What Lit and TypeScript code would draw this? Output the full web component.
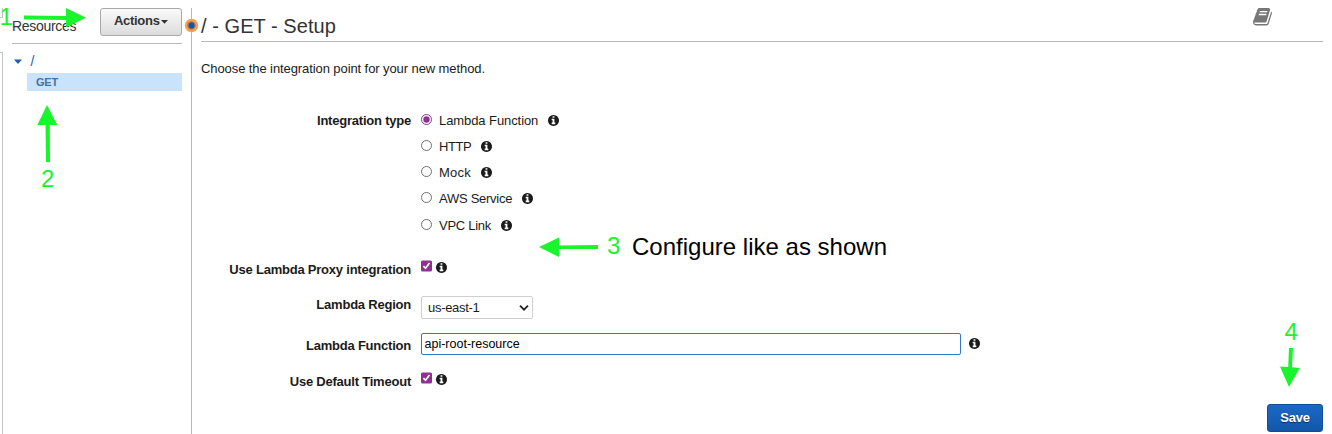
import { LitElement, html, css, svg } from "lit";
import { customElement, property } from "lit/decorators.js";

@customElement("info-icon")
class InfoIcon extends LitElement {
  static styles = css`
    :host { display: block; width: 11px; height: 11px; flex: none; }
    svg { display: block; }
  `;
  render() {
    return html`<svg width="11" height="11" viewBox="0 128 1536 1536" fill="#1b1b1b"><path d="M1024 1376v-160q0-14-9-23t-23-9h-96v-512q0-14-9-23t-23-9h-320q-14 0-23 9t-9 23v160q0 14 9 23t23 9h96v320h-96q-14 0-23 9t-9 23v160q0 14 9 23t23 9h448q14 0 23-9t9-23zm-128-896v-160q0-14-9-23t-23-9h-192q-14 0-23 9t-9 23v160q0 14 9 23t23 9h192q14 0 23-9t9-23zm640 416q0 209-103 385.5t-279.5 279.5-385.5 103-385.5-103-279.5-279.5-103-385.5 103-385.5 279.5-279.5 385.5-103 385.5 103 279.5 279.5 103 385.5z"/></svg>`;
  }
}

@customElement("radio-option")
class RadioOption extends LitElement {
  @property() label = "";
  @property({ type: Number }) tracking = 0;
  @property({ type: Boolean }) checked = false;
  static styles = css`
    :host { display: flex; height: 26px; align-items: flex-start; line-height: 15px; }
    .dot { display: block; flex: none; width: 12px; height: 12px; margin: 1px 6px 0 0; }
    .text { padding-top: 1px; margin-right: 10px; white-space: nowrap; }
    info-icon { margin-top: 3px; }
  `;
  render() {
    const c = this.checked ? "#8a348f" : "#6f6f6f";
    return html`
      <svg class="dot" viewBox="0 0 12 12">
        <circle cx="5.5" cy="6.5" r="5" fill="#fff" stroke=${c} stroke-width="1"></circle>
        ${this.checked ? svg`<circle cx="5.5" cy="6.5" r="3.2" fill=${c}></circle>` : null}
      </svg>
      <span class="text" style="letter-spacing:${this.tracking}px">${this.label}</span><info-icon></info-icon>`;
  }
}

@customElement("check-box")
class CheckBox extends LitElement {
  static styles = css`
    :host { display: flex; align-items: flex-start; gap: 4px; }
    svg { display: block; }
    info-icon { margin-top: 2px; }
  `;
  render() {
    return html`
      <svg width="11" height="12" viewBox="0 0 11 12">
        <rect y="0.4" width="11" height="11" rx="1.5" fill="#8a348f"></rect>
        <path d="M2.4 6.1 4.5 8.3 8.5 2.900" fill="none" stroke="#fff" stroke-width="1.6"></path>
      </svg><info-icon></info-icon>`;
  }
}

@customElement("app-root")
class AppRoot extends LitElement {
  static styles = css`
    :host {
      display: block; position: relative; width: 1332px; height: 434px; overflow: hidden;
      background: #fff; color: #1b1b1b; font: 13px/15px "Liberation Sans", Arial, sans-serif;
    }
    * { box-sizing: border-box; }
    .page { display: flex; height: 434px; }
    .edge { width: 3px; flex: none; display: flex; flex-direction: column; padding-top: 8px; }
    .edge-top { height: 10px; border: solid #c4c4c4; border-width: 0 1px 1px 0; }
    .edge-body { flex: 1; margin-top: 34px; border: solid #c4c4c4; border-width: 1px 1px 0 0; }
    .side { width: 188px; flex: none; padding: 8px 9px 0; }
    .side-head { display: flex; justify-content: space-between; height: 36px; border-bottom: 1px solid #b8b8b8; }
    .resources { font-size: 14px; line-height: 16px; padding-top: 10px; color: #333; letter-spacing: -0.3px; }
    .actions {
      display: flex; width: 82px; height: 28px; padding: 4px 0 0 13px; border: 1px solid #a9a9a9; border-radius: 3px;
      background: linear-gradient(#fafafa, #dcdcdc); font-weight: bold; color: #333; letter-spacing: -0.3px;
    }
    .actions svg { display: block; margin: 7px 0 0 1.5px; }
    .root-row { display: flex; height: 29px; padding: 10px 0 0 2px; color: #1b5fae; font-size: 14px; }
    .root-row svg { display: block; margin: 5px 8.5px 0 0; }
    .get { height: 18px; margin-left: 15px; padding-left: 9px; background: #c9e3fd; color: #44719f; font-size: 11px; line-height: 19px; font-weight: bold; letter-spacing: -0.2px; }
    .main { flex: 1; margin-top: 8px; padding: 0 9px; border-left: 1px solid #b8b8b8; display: flex; flex-direction: column; }
    .title { display: flex; justify-content: space-between; height: 34px; border-bottom: 1px solid #b8b8b8; }
    h1 { margin: 0; padding-top: 7px; font-weight: normal; font-size: 20px; line-height: 23px; color: #333; letter-spacing: 0.05px; }
    .book { display: block; margin-right: 51px; }
    .intro { margin: 19px 0 0; height: 51px; letter-spacing: -0.09px; }
    .form { display: grid; grid-template-columns: 210px 1fr; column-gap: 10px; grid-template-rows: 148px 36px 37px 39px 30px; }
    .label { font-weight: bold; text-align: right; white-space: nowrap; letter-spacing: -0.22px; }
    .l1 { padding-top: 1px; } .l2 { padding-top: 2px; } .l3 { padding-top: 1px; } .l4 { padding-top: 5px; } .l5 { padding-top: 2px; }
    .last { margin-top: 1px; }
    .select {
      width: 112px; height: 23px; border: 1px solid #cfcfcf; border-radius: 2px; padding: 3px 3px 0 6px;
      display: flex; justify-content: space-between; letter-spacing: -0.3px;
    }
    .select svg { display: block; margin-top: 5px; }
    .row { display: flex; gap: 7.5px; }
    .row info-icon { margin-top: 5px; }
    .input { width: 540px; height: 22px; border: 1px solid #2f7cc4; border-radius: 2px; padding: 3px 0 0 2.5px; font-size: 12.5px; color: #000; }
    .foot { margin-top: auto; display: flex; justify-content: flex-end; padding-bottom: 2px; }
    .save {
      width: 56px; height: 28px; border: 1px solid #124c92; border-radius: 3px; background: linear-gradient(#1a68c7, #1457a8);
      color: #fff; font-weight: bold; text-align: center; line-height: 26px; text-shadow: 0 1px 1px #0a2f60; letter-spacing: -0.2px;
    }
    .notes { position: absolute; left: 0; top: 0; pointer-events: none; font-size: 24px; }
  `;

  render() {
    return html`
      <div class="page">
        <div class="edge"><div class="edge-top"></div><div class="edge-body"></div></div>
        <div class="side">
          <div class="side-head">
            <span class="resources">Resources</span>
            <div class="actions">Actions<svg width="7" height="4" viewBox="0 0 7 4"><path d="M0 0h7L3.5 3.7z" fill="#333"></path></svg></div>
          </div>
          <div class="root-row"><svg width="8" height="5" viewBox="0 0 8 5"><path d="M0 0.500h8L4 4.900z" fill="#1b5fae"></path></svg><span>/</span></div>
          <div class="get">GET</div>
        </div>
        <div class="main">
          <div class="title">
            <h1>/ - GET - Setup</h1>
            <svg class="book" width="19" height="18" viewBox="0 128 1672 1584" fill="#777"><path d="M1639 478q40 57 18 129l-275 906q-19 64-76.500 107.500t-122.500 43.500h-923q-77 0-148.500-53.500t-99.500-131.500q-24-67-2-127 0-4 3-27t4-37q1-8-3-21.500t-3-19.500q2-11 8-21t16.500-23.500 16.500-23.500q23-38 45-91.500t30-91.500q3-10 .5-30t-.5-28q3-11 17-28t17-23q21-36 42-92t25-90q1-9-2.500-32t.5-28q4-13 22-30.500t22-22.500q19-26 42.500-84.500t27.500-96.500q1-8-3-25.500t-2-26.500q2-8 9-18t18-23 17-21q8-12 16.500-30.500t15-35 16-36 19.500-32 26.500-23.500 36-11.500 47.500 5.500l-1 3q38-9 51-9h761q74 0 114 56t18 130l-274 906q-36 119-71.500 153.500t-128.500 34.500h-869q-27 0-38 15-11 16-1 43 24 70 144 70h923q29 0 56-15.500t35-41.500l300-987q7-22 5-57 38 15 59 43zm-1064 2q-4 13 2 22.500t20 9.500h608q13 0 25.500-9.500t16.500-22.500l21-64q4-13-2-22.500t-20-9.500h-608q-13 0-25.500 9.500t-16.500 22.500zm-83 256q-4 13 2 22.500t20 9.500h608q13 0 25.500-9.500t16.500-22.500l21-64q4-13-2-22.500t-20-9.500h-608q-13 0-25.500 9.500t-16.500 22.500z"/></svg>
          </div>
          <p class="intro">Choose the integration point for your new method.</p>
          <div class="form">
            <div class="label l1">Integration type</div>
            <div>
              <radio-option label="Lambda Function" tracking="-0.08" checked></radio-option>
              <radio-option label="HTTP" tracking="-0.4"></radio-option>
              <radio-option label="Mock" tracking="0.2"></radio-option>
              <radio-option label="AWS Service" tracking="-0.27"></radio-option>
              <radio-option class="last" label="VPC Link" tracking="-0.28"></radio-option>
            </div>
            <div class="label l2">Use Lambda Proxy integration</div>
            <check-box></check-box>
            <div class="label l3">Lambda Region</div>
            <div class="select">us-east-1<svg width="10" height="7" viewBox="0 0 10 7"><path d="M1 0.700 5 4.700 9 0.700" fill="none" stroke="#222" stroke-width="1.8"></path></svg></div>
            <div class="label l4">Lambda Function</div>
            <div class="row"><div class="input">api-root-resource</div><info-icon></info-icon></div>
            <div class="label l5">Use Default Timeout</div>
            <check-box></check-box>
          </div>
          <div class="foot"><div class="save">Save</div></div>
        </div>
      </div>
      <svg class="notes" width="1332" height="434" viewBox="0 0 1332 434">
        <circle cx="191.5" cy="25.5" r="6.7" fill="#f9a04b"></circle>
        <circle cx="191.5" cy="25.5" r="4.2" fill="#a87a58"></circle>
        <circle cx="191.5" cy="25.5" r="2.9" fill="#0f55b5"></circle>
        <g fill="#19f52d">
          <path d="M24 15.5 66 16V8l20 9.700L66 27.500V20L24 19.500z"></path>
          <path d="M47 105 57.300 125H49.800L50 162H46L45.500 125H37.300z"></path>
          <path d="M539 247 559 237.500V245.400L598 245V249L559 249V257z"></path>
          <path d="M1289 387 1280 366.500 1288.200 367 1289 348H1293L1292 367.300 1299.700 368z"></path>
          <text x="-0.5" y="25">1</text>
          <text x="41" y="187">2</text>
          <text x="607" y="254">3</text>
          <text x="1284.500" y="340">4</text>
        </g>
        <text x="632" y="255" fill="#000" textLength="255">Configure like as shown</text>
      </svg>`;
  }
}
